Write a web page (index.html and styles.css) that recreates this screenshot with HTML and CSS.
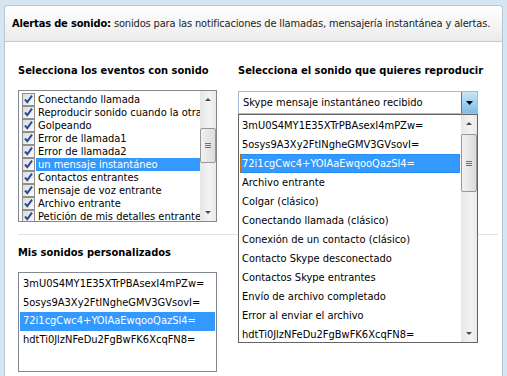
FILE: index.html
```html
<!DOCTYPE html>
<html lang="es">
<head>
    <meta charset="UTF-8">
    <title>Alertas de sonido</title>
    <link rel="stylesheet" href="styles.css">
</head>
<body>

    <div class="panel">
        <div class="panel-head">
            <b>Alertas de sonido:</b> sonidos para las notificaciones de llamadas, mensajería instantánea y alertas.
        </div>

        <div class="panel-body">
            <div class="top">
                <div class="col-left">
                    <h2>Selecciona los eventos con sonido</h2>
                    <div class="listbox events">
                        <div class="rows">
                            <div class="ev"><span class="check"></span><span class="ev-text">Conectando llamada</span></div>
                            <div class="ev"><span class="check"></span><span class="ev-text">Reproducir sonido cuando la otra persona esté esperando</span></div>
                            <div class="ev"><span class="check"></span><span class="ev-text">Golpeando</span></div>
                            <div class="ev"><span class="check"></span><span class="ev-text">Error de llamada1</span></div>
                            <div class="ev"><span class="check"></span><span class="ev-text">Error de llamada2</span></div>
                            <div class="ev selected"><span class="check"></span><span class="ev-text">un mensaje instantáneo</span></div>
                            <div class="ev"><span class="check"></span><span class="ev-text">Contactos entrantes</span></div>
                            <div class="ev"><span class="check"></span><span class="ev-text">mensaje de voz entrante</span></div>
                            <div class="ev"><span class="check"></span><span class="ev-text">Archivo entrante</span></div>
                            <div class="ev"><span class="check"></span><span class="ev-text">Petición de mis detalles entrante</span></div>
                        </div>
                        <div class="scrollbar">
                            <span class="arrow up"></span>
                            <span class="thumb thumb-left"><i></i><i></i><i></i></span>
                            <span class="arrow down"></span>
                        </div>
                    </div>
                </div>

                <div class="col-right">
                    <h2>Selecciona el sonido que quieres reproducir</h2>
                    <div class="combo">
                        <span class="combo-value">Skype mensaje instantáneo recibido</span>
                        <span class="combo-btn"><svg width="7" height="4" viewBox="0 0 7 4"><path d="M0 0h7L3.5 4z" fill="#000"/></svg></span>

                        <div class="dropdown">
                            <div class="rows">
                                <div class="item">3mU0S4MY1E35XTrPBAsexI4mPZw=</div>
                                <div class="item">5osys9A3Xy2FtINgheGMV3GVsovI=</div>
                                <div class="item selected focus">72i1cgCwc4+YOIAaEwqooQazSl4=</div>
                                <div class="item">Archivo entrante</div>
                                <div class="item">Colgar (clásico)</div>
                                <div class="item">Conectando llamada (clásico)</div>
                                <div class="item">Conexión de un contacto (clásico)</div>
                                <div class="item">Contacto Skype desconectado</div>
                                <div class="item">Contactos Skype entrantes</div>
                                <div class="item">Envío de archivo completado</div>
                                <div class="item">Error al enviar el archivo</div>
                                <div class="item">hdtTi0JlzNFeDu2FgBwFK6XcqFN8=</div>
                            </div>
                            <div class="scrollbar">
                                <span class="arrow up"></span>
                                <span class="thumb thumb-right"><i></i><i></i><i></i></span>
                                <span class="arrow down"></span>
                            </div>
                        </div>
                    </div>
                </div>
            </div>

            <div class="separator"></div>

            <div class="col-left">
                <h2 class="sub">Mis sonidos personalizados</h2>
                <div class="listbox custom">
                    <div class="item">3mU0S4MY1E35XTrPBAsexI4mPZw=</div>
                    <div class="item">5osys9A3Xy2FtINgheGMV3GVsovI=</div>
                    <div class="item selected">72i1cgCwc4+YOIAaEwqooQazSl4=</div>
                    <div class="item">hdtTi0JlzNFeDu2FgBwFK6XcqFN8=</div>
                </div>
            </div>
        </div>
    </div>

</body>
</html>
```

FILE: styles.css
```css
body {
    margin: 0;
    background-color: #d7e4f2;
    font-family: "DejaVu Sans Condensed", "DejaVu Sans", sans-serif;
    font-size: 11px;
    color: #000;
    height: 376px;
    overflow: hidden;
}
.panel {
    margin: 5px 4px 0 4px;
    height: 371px;
    border: 1px solid #b6c6d8;
    border-bottom: none;
    border-radius: 4px 4px 0 0;
    background-color: #fff;
    box-sizing: border-box;
}
.panel-head {
    height: 35px;
    line-height: 35px;
    padding-left: 7px;
    white-space: nowrap;
    letter-spacing: -0.15px;
    border-bottom: 1px solid #c9c9c9;
    border-radius: 4px 4px 0 0;
    background: linear-gradient(#ffffff, #ebebeb);
    color: #1e1e1e;
}
.panel-head b {
    color: #000;
}
.panel-body {
    padding: 0 4px 0 13px;
}
.top {
    display: flex;
    gap: 21px;
}
.col-left {
    width: 199px;
}
.col-right {
    width: 240px;
}
h2 {
    margin: 0;
    padding: 22px 0 13px 0;
    font-size: 11px;
    line-height: 13px;
    font-weight: bold;
    white-space: nowrap;
}
h2.sub {
    padding-top: 11px;
}

/* list boxes */
.listbox {
    border: 1px solid #828790;
    background-color: #fff;
    box-sizing: border-box;
}
.events {
    height: 132px;
    display: flex;
}
.events .rows {
    flex: 1;
    min-width: 0;
    padding-top: 2px;
    overflow: hidden;
}
.ev {
    display: flex;
    align-items: center;
    height: 13px;
    white-space: nowrap;
}
.ev-text {
    line-height: 13px;
    padding-left: 2px;
    flex: 1;
}
.ev.selected .ev-text {
    background-color: #3399ff;
    color: #fff;
}
.check {
    flex: none;
    width: 11px;
    height: 11px;
    margin: 0 1px 0 3px;
    border: 1px solid #8f8f8f;
    background-image: url("data:image/svg+xml,%3Csvg xmlns='http://www.w3.org/2000/svg' width='11' height='11'%3E%3Cpath d='M2 5.5l2.3 2.6L9 1.6' fill='none' stroke='%232a4d99' stroke-width='2'/%3E%3C/svg%3E"), linear-gradient(135deg, #dcdcdc, #fbfbfb);
}

/* scrollbars */
.scrollbar {
    flex: none;
    width: 16px;
    position: relative;
    background: linear-gradient(90deg, #e6e6e6, #f3f3f3 60%, #e9e9e9);
}
.arrow {
    position: absolute;
    left: 5px;
    width: 0;
    height: 0;
    border-left: 3px solid transparent;
    border-right: 3px solid transparent;
}
.arrow.up {
    top: 7px;
    border-bottom: 3px solid #4d4d4d;
}
.arrow.down {
    bottom: 7px;
    border-top: 3px solid #4d4d4d;
}
.thumb {
    position: absolute;
    left: 0;
    width: 14px;
    border: 1px solid #979797;
    border-radius: 2px;
    background: linear-gradient(90deg, #f1f1f1, #dcdcdc);
    display: flex;
    flex-direction: column;
    justify-content: center;
    align-items: center;
    gap: 1px;
}
.thumb i {
    width: 6px;
    height: 1px;
    background-color: #6f6f6f;
}
.thumb-left {
    top: 37px;
    height: 33px;
}
.thumb-right {
    top: 19px;
    height: 56px;
}

/* combo box */
.combo {
    position: relative;
    height: 23px;
    border: 1px solid #a3bcd5;
    box-sizing: border-box;
    display: flex;
    align-items: center;
    margin-top: 1px;
}
.combo-value {
    flex: 1;
    padding-left: 4px;
}
.combo-btn {
    width: 15px;
    height: 21px;
    border-left: 1px solid #3c7fb1;
    background: linear-gradient(#c9e6f7, #7ebde6);
    display: flex;
    align-items: center;
    justify-content: center;
}
.dropdown {
    position: absolute;
    left: -1px;
    top: 22px;
    width: 240px;
    height: 229px;
    border: 1px solid #646464;
    box-sizing: border-box;
    background-color: #fff;
    display: flex;
}
.dropdown .rows {
    flex: 1;
    padding: 1px 1px 0 1px;
}
.item {
    height: 19px;
    line-height: 19px;
    padding-left: 2px;
    white-space: nowrap;
    box-sizing: border-box;
}
.item.selected {
    background-color: #3399ff;
    color: #fff;
}
.item.focus {
    border: 1px dotted #b0660d;
    line-height: 17px;
    padding-left: 1px;
}

.separator {
    height: 1px;
    margin-top: 12px;
    background-color: #e3e3e3;
}
.custom {
    height: 100px;
    padding: 2px 1px;
}
.custom .item {
    height: 18.7px;
    line-height: 18.7px;
    padding-left: 3px;
}
```
